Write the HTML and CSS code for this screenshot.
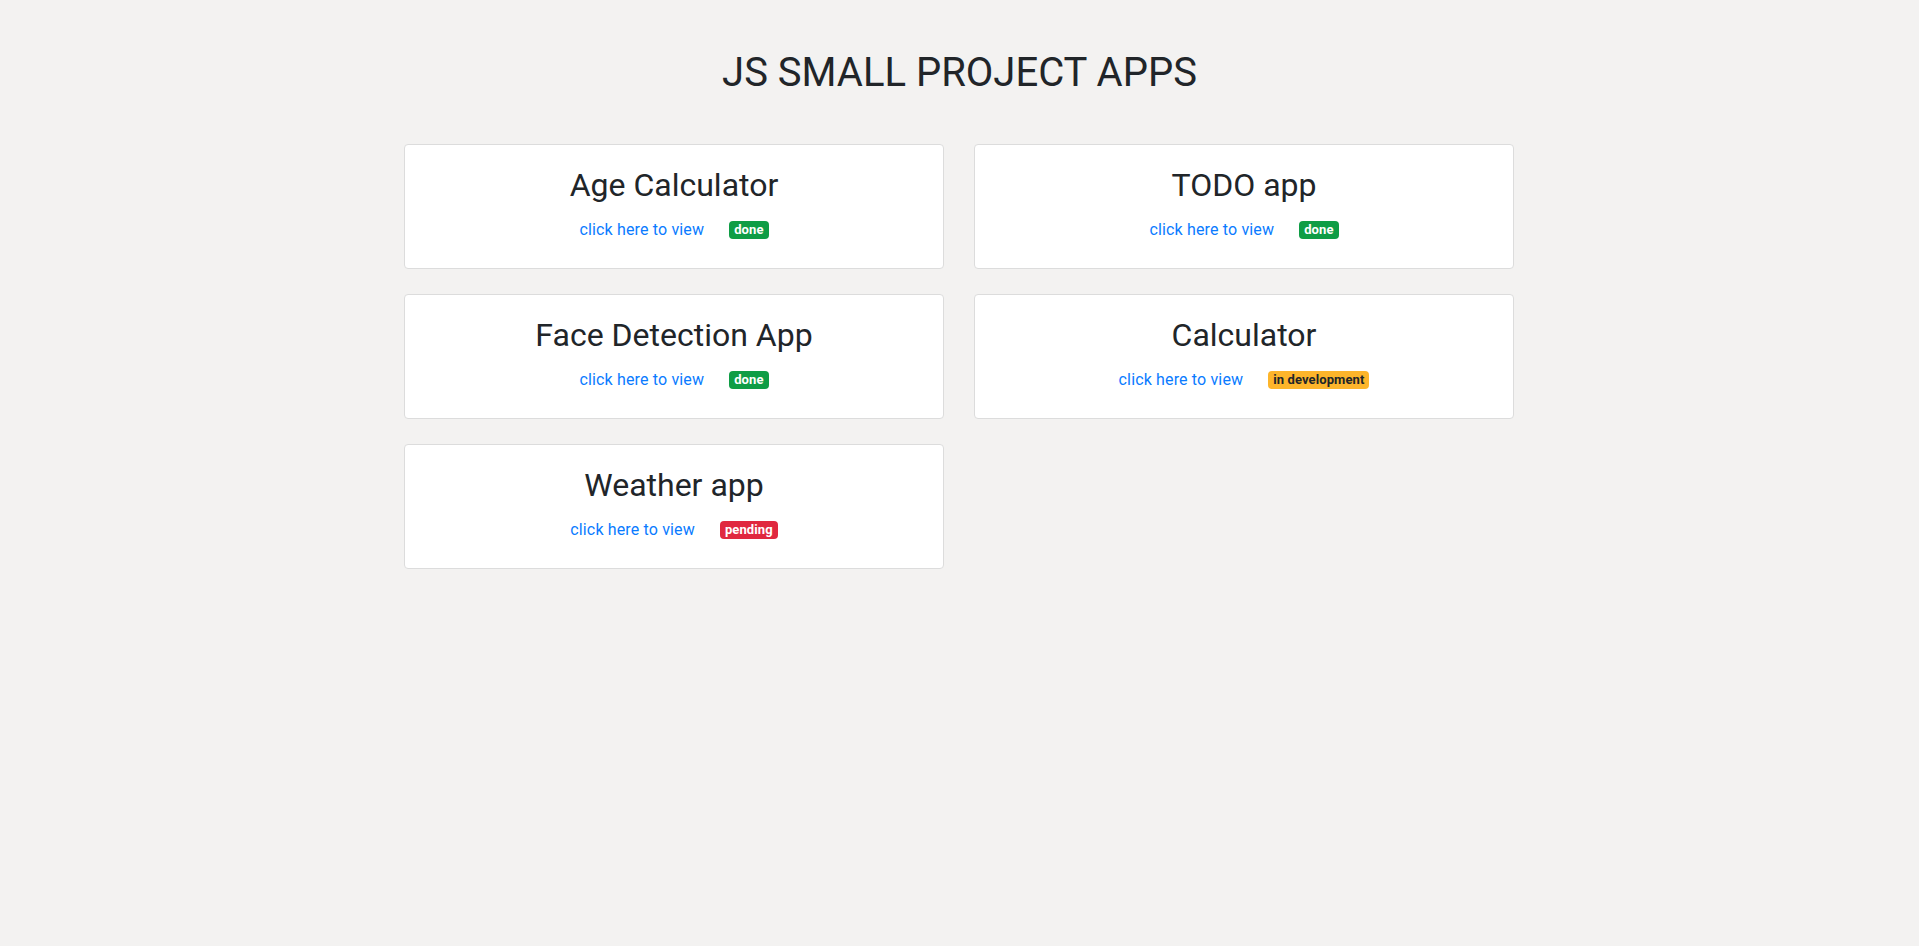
FILE: index.html
```html
<!DOCTYPE html>
<html lang="en">
<head>
<meta charset="utf-8">
<title>JS Small Project Apps</title>
<link rel="stylesheet" href="styles.css">
</head>
<body>
  <h1 class="page-title">JS SMALL PROJECT APPS</h1>
  <main class="container">
    <div class="card">
      <h2 class="card-title">Age Calculator</h2>
      <div class="card-meta">
        <a class="view-link" href="#">click here to view</a>
        <span class="badge badge-done">done</span>
      </div>
    </div>
    <div class="card">
      <h2 class="card-title">TODO app</h2>
      <div class="card-meta">
        <a class="view-link" href="#">click here to view</a>
        <span class="badge badge-done">done</span>
      </div>
    </div>
    <div class="card">
      <h2 class="card-title">Face Detection App</h2>
      <div class="card-meta">
        <a class="view-link" href="#">click here to view</a>
        <span class="badge badge-done">done</span>
      </div>
    </div>
    <div class="card">
      <h2 class="card-title">Calculator</h2>
      <div class="card-meta">
        <a class="view-link" href="#">click here to view</a>
        <span class="badge badge-dev">in development</span>
      </div>
    </div>
    <div class="card">
      <h2 class="card-title">Weather app</h2>
      <div class="card-meta">
        <a class="view-link" href="#">click here to view</a>
        <span class="badge badge-pending">pending</span>
      </div>
    </div>
  </main>
</body>
</html>
```

FILE: styles.css
```css
* {
  box-sizing: border-box;
}

html, body {
  margin: 0;
  padding: 0;
}

body {
  background: #f3f2f1;
  font-family: Roboto, "Noto Sans", "Liberation Sans", sans-serif;
  color: #212529;
  font-size: 16px;
  line-height: 1.5;
}

.page-title {
  margin: 49px 0 47px;
  font-size: 40px;
  font-weight: 400;
  line-height: 48px;
  text-align: center;
  color: #212529;
}

.container {
  width: 1111px;
  margin: 0 auto;
  display: grid;
  grid-template-columns: 540px 540px;
  column-gap: 30px;
  row-gap: 25px;
}

.card {
  background: #ffffff;
  border: 1px solid #dcdcdc;
  border-radius: 4px;
  height: 125px;
  padding: 21px 20px 0;
  text-align: center;
}

.card-title {
  margin: 0 0 14px;
  font-size: 32px;
  font-weight: 400;
  line-height: 38px;
  color: #212529;
}

.card-meta {
  display: flex;
  justify-content: center;
  align-items: center;
  gap: 25px;
  height: 24px;
}

.view-link {
  color: #0a7bff;
  text-decoration: none;
  font-size: 16px;
  letter-spacing: 0.15px;
  line-height: 24px;
}

.badge {
  display: inline-block;
  font-size: 13px;
  font-weight: 700;
  letter-spacing: 0.1px;
  line-height: 12px;
  padding: 3px 5px;
  border-radius: 4px;
  margin-top: -1px;
}

.badge-done {
  background: #0f9d45;
  color: #ffffff;
}

.badge-dev {
  background: #fdb52b;
  color: #212529;
}

.badge-pending {
  background: #e0283f;
  color: #ffffff;
}
```
